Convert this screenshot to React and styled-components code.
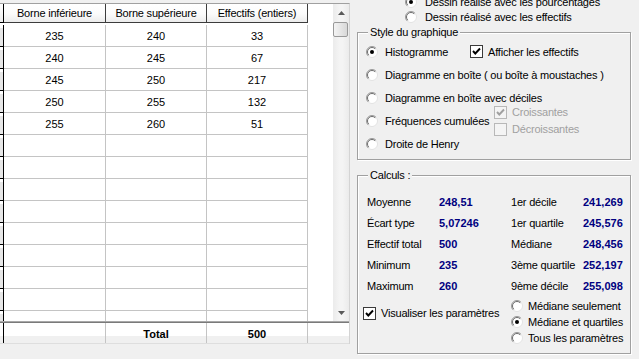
import React from "react";
import styled, { createGlobalStyle } from "styled-components";

const GlobalStyle = createGlobalStyle`
  body {
    margin: 0;
    background: #f0f0f0;
    font-family: "Liberation Sans", Arial, sans-serif;
    font-size: 11px;
    color: #000;
  }
`;

const Screen = styled.div`
  display: flex;
  width: 639px;
  height: 359px;
  overflow: hidden;
  background: #f0f0f0;
`;

/* ---------- grid ---------- */

const GridPane = styled.div`
  flex: none;
  width: 350px;
  padding-top: 3px;
  box-sizing: border-box;
`;

const GridFrame = styled.div`
  display: flex;
  flex-direction: column;
  border-top: 1px solid #a0a0a0;
  border-right: 1px solid #d4d4d4;
`;

const GridMain = styled.div`
  display: flex;
  height: 317px;
`;

const Table = styled.div`
  flex: 1;
  display: flex;
  flex-direction: column;
  background: #fff;
  overflow: hidden;
`;

const Row = styled.div`
  display: flex;
  flex: none;
  height: ${p => p.h}px;
`;

const Stub = styled.div`
  flex: none;
  width: 3px;
  border-right: 1px solid #000;
  border-bottom: ${p => (p.open ? "none" : "1px solid #000")};
  background: ${p => p.bg || "linear-gradient(#fff 0 3px, #e6e6e6 3px)"};
  box-sizing: content-box;
`;

const HeadCell = styled.div`
  flex: none;
  width: ${p => p.w}px;
  box-sizing: border-box;
  display: flex;
  align-items: center;
  justify-content: center;
  border-right: 1px solid #3c3c3c;
  border-bottom: 1px solid #3c3c3c;
  background: linear-gradient(#ffffff 0%, #fbfbfb 55%, #ececec 100%);
  letter-spacing: -0.2px;
`;

const Cell = styled.div`
  flex: none;
  width: ${p => p.w}px;
  box-sizing: border-box;
  display: flex;
  align-items: center;
  justify-content: center;
  border-right: 1px solid #c4c4c4;
  border-bottom: 1px solid #c4c4c4;
`;

const Filler = styled.div`
  flex: 1;
  background: #fff;
`;

const Body = styled.div`
  display: flex;
  flex-direction: column;
  padding-top: 2px;
  height: 298px;
  box-sizing: border-box;
  overflow: hidden;
`;

const Scrollbar = styled.div`
  flex: none;
  width: 16px;
  display: flex;
  flex-direction: column;
  align-items: center;
  background: linear-gradient(90deg, #ebebeb, #f4f4f4 40%, #f4f4f4 60%, #ebebeb);
`;

const ArrowButton = styled.div`
  height: 17px;
  width: 16px;
  display: flex;
  align-items: center;
  justify-content: center;
  margin-top: ${p => (p.down ? "auto" : "0")};
`;

const Thumb = styled.div`
  width: 15px;
  height: 15px;
  margin: 1px 1px 0 0;
  box-sizing: border-box;
  border: 1px solid #999;
  border-radius: 2px;
  background: linear-gradient(90deg, #f3f3f3, #e6e6e6 50%, #d8d8d8);
`;

const Divider = styled.div`
  height: 2px;
  background: linear-gradient(#a8a8a8 0 1px, #7a7a7a 1px);
`;

const FootRow = styled.div`
  display: flex;
  height: 21px;
  border-bottom: 1px solid #dedede;
  box-sizing: border-box;
`;

const FootCell = styled.div`
  flex: ${p => (p.w ? "none" : "1")};
  width: ${p => (p.w ? `${p.w}px` : "auto")};
  box-sizing: border-box;
  display: flex;
  justify-content: center;
  padding-top: 5px;
  font-weight: bold;
  border-right: ${p => (p.last ? "none" : "1px solid #c4c4c4")};
  background: linear-gradient(#fff 0 13px, #f0f0f0 13px);
`;

/* ---------- right panel ---------- */

const Panel = styled.div`
  flex: 1;
  display: flex;
  flex-direction: column;
  padding-left: 7px;
  letter-spacing: -0.2px;
`;

const TopOptions = styled.div`
  display: flex;
  flex-direction: column;
  margin-top: -6px;
  padding-left: 48px;
`;

const Group = styled.div`
  box-sizing: border-box;
  width: 274px;
  height: ${p => p.h}px;
  margin-top: ${p => p.mt}px;
  border: 1px solid #a0a0a0;
  box-shadow: inset 1px 1px 0 #fff, 1px 1px 0 #fff;
  display: flex;
  flex-direction: column;
`;

const Caption = styled.div`
  align-self: flex-start;
  margin: -7px 0 0 10px;
  padding: 0 2px;
  line-height: 13px;
  background: #f0f0f0;
`;

const OptionList = styled.div`
  display: flex;
  flex-direction: column;
  padding: ${p => p.pad};
`;

const OptionRow = styled.div`
  display: flex;
  align-items: center;
  height: ${p => p.h}px;
`;

const Option = styled.label`
  display: flex;
  align-items: center;
  gap: ${p => p.gap || 7}px;
  width: ${p => (p.w ? `${p.w}px` : "auto")};
  height: ${p => (p.h ? `${p.h}px` : "auto")};
  margin-top: ${p => p.mt || 0}px;
  flex: none;
  white-space: nowrap;
  color: ${p => (p.disabled ? "#a0a0a0" : "#000")};
  svg {
    flex: none;
  }
`;

const SubChecks = styled.div`
  display: flex;
  flex-direction: column;
`;

const Stats = styled.div`
  display: grid;
  grid-template-columns: 72px 72px 72px 1fr;
  grid-auto-rows: 21px;
  align-items: center;
  padding: 9px 0 0 9px;
`;

const StatLabel = styled.span`
  white-space: nowrap;
`;

const StatValue = styled.span`
  font-weight: bold;
  color: #000080;
  white-space: nowrap;
  letter-spacing: 0;
`;

const BottomRow = styled.div`
  display: flex;
  margin-top: 2px;
  padding-left: 5px;
`;

/* ---------- glyphs ---------- */

const RadioIcon = ({ checked }) => (
  <svg width="12" height="12" viewBox="0 0 12 12">
    <circle cx="6" cy="6" r="5.5" fill="#fff" stroke="#e2e2e2" />
    <path d="M2.1 9.9 A5.5 5.5 0 0 1 9.9 2.1" fill="none" stroke="#9c9c9c" />
    <path d="M2.8 9.2 A4.5 4.5 0 0 1 9.2 2.8" fill="none" stroke="#6e6e6e" />
    {checked && <circle cx="6" cy="6" r="2" fill="#000" />}
  </svg>
);

const CheckIcon = ({ checked, disabled }) => (
  <svg width="13" height="13" viewBox="0 0 13 13">
    <rect
      x="0.5"
      y="0.5"
      width="12"
      height="12"
      fill={disabled ? "#f4f4f4" : "#fff"}
      stroke={disabled ? "#b8b8b8" : "#3a3a3a"}
    />
    {checked && (
      <path
        d="M3 6 L5.3 8.5 L10 3.5"
        fill="none"
        stroke={disabled ? "#a0a0a0" : "#000"}
        strokeWidth="1.9"
      />
    )}
  </svg>
);

const Arrow = ({ down }) => (
  <svg width="7" height="4" viewBox="0 0 7 4">
    <path d={down ? "M0 0 H7 L3.5 4 Z" : "M0 4 H7 L3.5 0 Z"} fill="#5a5a5a" />
  </svg>
);

const Radio = ({ checked, children, ...rest }) => (
  <Option {...rest}>
    <RadioIcon checked={checked} />
    {children}
  </Option>
);

const Check = ({ checked, disabled, children, ...rest }) => (
  <Option gap={5} disabled={disabled} {...rest}>
    <CheckIcon checked={checked} disabled={disabled} />
    {children}
  </Option>
);

/* ---------- data ---------- */

const widths = [102, 101, 101];
const headers = ["Borne inférieure", "Borne supérieure", "Effectifs (entiers)"];
const data = [
  [235, 240, 33],
  [240, 245, 67],
  [245, 250, 217],
  [250, 255, 132],
  [255, 260, 51],
];
const rows = [...data, ...Array.from({ length: 9 }, () => ["", "", ""])];

const stats = [
  ["Moyenne", "248,51", "1er décile", "241,269"],
  ["Écart type", "5,07246", "1er quartile", "245,576"],
  ["Effectif total", "500", "Médiane", "248,456"],
  ["Minimum", "235", "3ème quartile", "252,197"],
  ["Maximum", "260", "9ème décile", "255,098"],
];

export default function App() {
  return (
    <>
      <GlobalStyle />
      <Screen>
        <GridPane>
          <GridFrame>
            <GridMain>
              <Table>
                <Row h={19}>
                  <Stub bg="linear-gradient(#fff, #ececec)" />
                  {headers.map((h, i) => (
                    <HeadCell key={h} w={widths[i]}>
                      {h}
                    </HeadCell>
                  ))}
                  <Filler />
                </Row>
                <Body>
                  {rows.map((r, i) => (
                    <Row h={22} key={i}>
                      <Stub />
                      {r.map((v, j) => (
                        <Cell key={j} w={widths[j]}>
                          {v}
                        </Cell>
                      ))}
                      <Filler />
                    </Row>
                  ))}
                </Body>
              </Table>
              <Scrollbar>
                <ArrowButton>
                  <Arrow />
                </ArrowButton>
                <Thumb />
                <ArrowButton down>
                  <Arrow down />
                </ArrowButton>
              </Scrollbar>
            </GridMain>
            <Divider />
            <FootRow>
              <Stub open bg="linear-gradient(#fff 0 13px, #f0f0f0 13px)" />
              <FootCell w={widths[0]} />
              <FootCell w={widths[1]}>Total</FootCell>
              <FootCell w={widths[2]}>500</FootCell>
              <FootCell last />
            </FootRow>
          </GridFrame>
        </GridPane>

        <Panel>
          <TopOptions>
            <OptionRow h={15}>
              <Radio checked gap={8}>Dessin réalisé avec les pourcentages</Radio>
            </OptionRow>
            <OptionRow h={15}>
              <Radio gap={8}>Dessin réalisé avec les effectifs</Radio>
            </OptionRow>
          </TopOptions>

          <Group h={128} mt={8}>
            <Caption>Style du graphique</Caption>
            <OptionList pad="1px 0 0 8px">
              <OptionRow h={23}>
                <Radio checked w={104}>Histogramme</Radio>
                <Check checked>Afficher les effectifs</Check>
              </OptionRow>
              <OptionRow h={23}>
                <Radio>Diagramme en boîte ( ou boîte à moustaches )</Radio>
              </OptionRow>
              <OptionRow h={23}>
                <Radio>Diagramme en boîte avec déciles</Radio>
              </OptionRow>
              <OptionRow h={23}>
                <Radio w={128}>Fréquences cumulées</Radio>
                <SubChecks>
                  <Check checked disabled h={17}>Croissantes</Check>
                  <Check disabled h={17}>Décroissantes</Check>
                </SubChecks>
              </OptionRow>
              <OptionRow h={23}>
                <Radio>Droite de Henry</Radio>
              </OptionRow>
            </OptionList>
          </Group>

          <Group h={179} mt={15}>
            <Caption>Calculs :</Caption>
            <Stats>
              {stats.map(s => (
                <React.Fragment key={s[0]}>
                  <StatLabel>{s[0]}</StatLabel>
                  <StatValue>{s[1]}</StatValue>
                  <StatLabel>{s[2]}</StatLabel>
                  <StatValue>{s[3]}</StatValue>
                </React.Fragment>
              ))}
            </Stats>
            <BottomRow>
              <Check checked w={148} h={16} mt={7}>
                Visualiser les paramètres
              </Check>
              <OptionList pad="0">
                <OptionRow h={16}>
                  <Radio gap={5}>Médiane seulement</Radio>
                </OptionRow>
                <OptionRow h={16}>
                  <Radio checked gap={5}>Médiane et quartiles</Radio>
                </OptionRow>
                <OptionRow h={16}>
                  <Radio gap={5}>Tous les paramètres</Radio>
                </OptionRow>
              </OptionList>
            </BottomRow>
          </Group>
        </Panel>
      </Screen>
    </>
  );
}
